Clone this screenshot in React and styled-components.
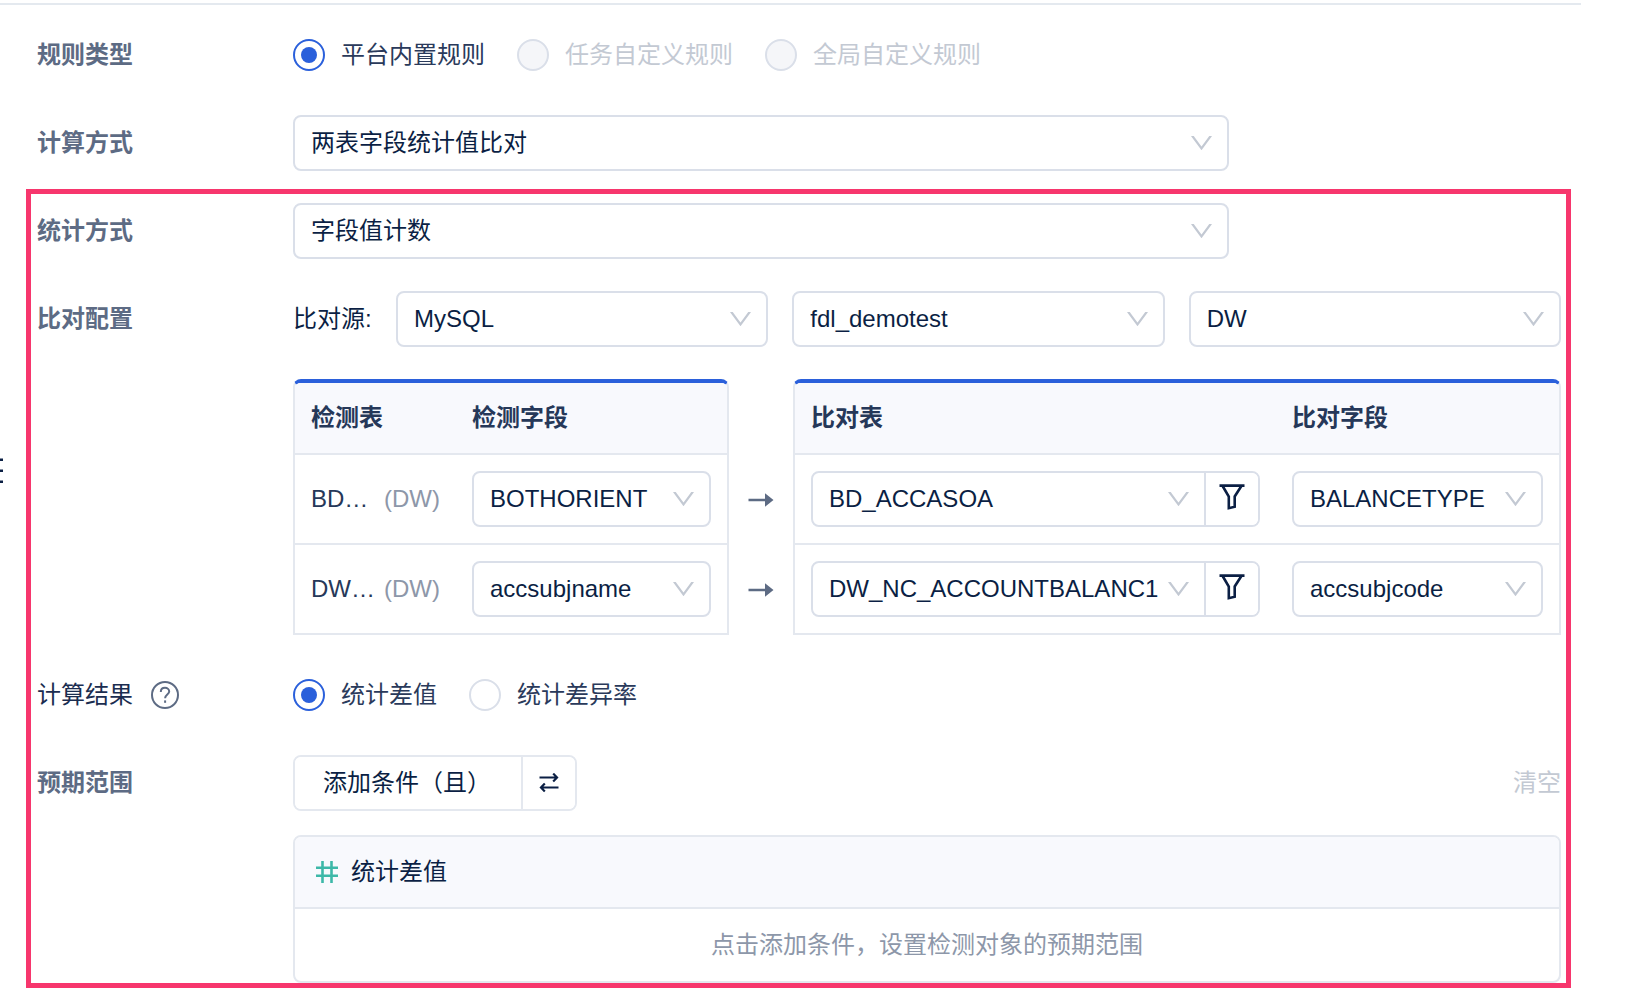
import React from 'react';
import styled, { createGlobalStyle } from 'styled-components';

const GlobalStyle = createGlobalStyle`
  * {
    box-sizing: border-box;
  }

  body {
    margin: 0;
    background: #fff;
    color: #0b1f44;
    font-family: 'Liberation Sans', 'Noto Sans CJK SC', sans-serif;
    font-size: 24px;
    line-height: 32px;
  }

  button,
  input,
  select {
    margin: 0;
    font: inherit;
    color: inherit;
  }
`

const Page = styled.main`
  position: relative;
  padding: 3px 62px 10px 0;
`

const Form = styled.form`
  display: flex;
  flex-direction: column;
  gap: 32px;
  padding: 22px 20px 0 37px;
  border-top: 2px solid #e4e9ef;
`

// handle of the collapsed side panel, it hangs over the left edge
const DragHandle = styled.button`
  position: absolute;
  top: 458px;
  left: 0;
  display: flex;
  padding: 0;
  border: 0;
  background: none;
`

const Highlight = styled.div`
  position: relative;
  display: flex;
  flex-direction: column;
  gap: 32px;

  &::after {
    content: '';
    position: absolute;
    inset: -14px -10px -5px -11px;
    border: 5px solid #f7366d;
    pointer-events: none;
  }
`

const Row = styled.section`
  display: grid;
  grid-template-columns: 256px minmax(0, 1fr);
`

const RowTitle = styled.div`
  display: flex;
  align-items: center;
  gap: 18px;
  height: 56px;
  color: ${props => (props.$plain ? '#1b2d50' : '#5d6b84')};
  font-weight: ${props => (props.$plain ? 400 : 700)};
`

const Stack = styled.div`
  display: flex;
  flex-direction: column;
  gap: ${props => props.$gap}px;
`

const Options = styled.div`
  display: flex;
  align-items: center;
  gap: 32px;
  height: 56px;
`

const Option = styled.label`
  display: flex;
  align-items: center;
  gap: 16px;
  color: ${props => (props.$disabled ? '#c3c9d3' : '#2a3a5b')};
`

const RadioInput = styled.input`
  appearance: none;
  display: grid;
  place-items: center;
  width: 32px;
  height: 32px;
  border: 2px solid #dadfe9;
  border-radius: 50%;
  background: #fff;

  &:checked {
    border-color: #2b60db;
  }

  &:checked::before {
    content: '';
    width: 16px;
    height: 16px;
    border-radius: 50%;
    background: #2b60db;
  }

  &:disabled {
    background: #f5f6f9;
  }
`

const SelectBox = styled.div`
  display: grid;
  align-items: center;
  flex: 1;
  min-width: 0;
  max-width: ${props => (props.$wide ? '936px' : 'none')};

  > * {
    grid-area: 1 / 1;
  }
`

const NativeSelect = styled.select`
  appearance: none;
  width: 100%;
  height: ${props => (props.$bare ? 52 : 56)}px;
  padding: 0 38px 0 16px;
  border: ${props => (props.$bare ? '0' : '2px solid #dadfe9')};
  border-radius: 8px;
  background: #fff;
  text-overflow: ellipsis;
`

const Chevron = styled.svg`
  justify-self: end;
  margin-right: ${props => (props.$bare ? 15 : 17)}px;
  pointer-events: none;
`

const Sources = styled.div`
  display: flex;
  align-items: center;
  gap: 24px;
`

const SourceLabel = styled.span`
  width: 79px;
`

const Mapping = styled.div`
  display: grid;
  grid-template-columns: minmax(0, 436fr) 64px minmax(0, 768fr);
`

const TableCard = styled.div`
  border: 2px solid #e4e8ef;
  border-top: 4px solid #2b60db;
  border-radius: 8px 8px 0 0;
  overflow: hidden;
`

const Table = styled.table`
  width: 100%;
  table-layout: fixed;
  border-collapse: separate;
  border-spacing: 0;
`

const Th = styled.th`
  width: ${props => (props.$width ? `${props.$width}px` : 'auto')};
  height: 72px;
  padding: 0 16px;
  border-bottom: 2px solid #e4e8ef;
  background: #f8f9fd;
  color: #263859;
  text-align: left;
`

const Td = styled.td`
  padding: 16px;
  border-bottom: 2px solid #e4e8ef;

  tr:last-child > & {
    border-bottom: 0;
  }
`

const TableName = styled.div`
  display: flex;
  gap: 8px;
  color: #263859;
  white-space: nowrap;
`

const ShortName = styled.span`
  width: 66px;
`

const Source = styled.span`
  color: #8d97a9;
`

const Arrows = styled.div`
  display: flex;
  flex-direction: column;
  align-items: center;
  gap: 76px;
  padding-top: 114px;
`

const Group = styled.div`
  display: flex;
  width: ${props => (props.$inline ? 'max-content' : 'auto')};
  height: 56px;
  border: 2px solid ${props => (props.$inline ? '#e4e8ef' : '#dadfe9')};
  border-radius: 8px;
  overflow: hidden;
`

const GroupButton = styled.button`
  padding: 0 30px 0 28px;
  border: 0;
  background: #fff;
`

const IconButton = styled.button`
  display: flex;
  flex: none;
  align-items: center;
  justify-content: center;
  width: 54px;
  padding: 0;
  border: 0;
  border-left: 2px solid ${props => (props.$light ? '#e4e8ef' : '#dadfe9')};
  background: #fff;
`

const HelpButton = styled.button`
  display: flex;
  padding: 0;
  border: 0;
  background: none;
`

const Toolbar = styled.div`
  display: flex;
  align-items: center;
  justify-content: space-between;
`

const ClearButton = styled.button`
  padding: 0;
  border: 0;
  background: none;

  &:disabled {
    color: #c3c9d3;
  }
`

const Conditions = styled.div`
  border: 2px solid #e4e8ef;
  border-radius: 8px;
  overflow: hidden;
`

const ConditionsHead = styled.div`
  display: flex;
  align-items: center;
  gap: 12px;
  height: 72px;
  padding: 0 20px;
  border-bottom: 2px solid #e4e8ef;
  background: #f8f9fd;
`

const ConditionsEmpty = styled.div`
  display: flex;
  align-items: center;
  justify-content: center;
  height: 72px;
  color: #8d97a9;
`

const mappings = [
  { table: 'BD…', source: 'DW', field: 'BOTHORIENT', target: 'BD_ACCASOA', targetField: 'BALANCETYPE' },
  { table: 'DW…', source: 'DW', field: 'accsubjname', target: 'DW_NC_ACCOUNTBALANC1', targetField: 'accsubjcode' },
];

const FilterIcon = () => (
  <svg width="26" height="30" viewBox="0 0 26 30" fill="none" stroke="#0b1f44" strokeWidth="2.6">
    <path d="M0.5 1.6H25.5" />
    <path d="M3.6 2L9.8 12.5V24.2L15.7 22.8V12.5L22.4 2" />
  </svg>
);

const ArrowIcon = () => (
  <svg width="26" height="14" viewBox="0 0 26 14">
    <path d="M0.5 5.7H17V0.2L25.5 7L17 13.8V8.3H0.5Z" fill="#5d6b84" />
  </svg>
);

const SwapIcon = () => (
  <svg width="20" height="20" viewBox="0 0 20 20" fill="none" stroke="#0b1f44" strokeWidth="2.2">
    <path d="M0.5 4.5H18M14.2 0.6L18 4.5L14.2 8.4" />
    <path d="M19.5 14.5H2M5.8 10.6L2 14.5L5.8 18.4" />
  </svg>
);

const HashIcon = () => (
  <svg width="24" height="24" viewBox="0 0 24 24" stroke="#3db8a8" strokeWidth="2.6">
    <path d="M7.5 1V23M16.5 1V23M1 7.8H23M1 15.8H23" />
  </svg>
);

const HelpIcon = () => (
  <svg width="28" height="28" viewBox="0 0 28 28" fill="none" stroke="#5d6b84" strokeWidth="2">
    <circle cx="14" cy="14" r="13" />
    <path d="M9.8 11C9.8 8.4 11.6 6.8 14 6.8S18.2 8.4 18.2 10.6C18.2 13.4 14.1 13.8 14.1 17.2" />
    <path d="M14.1 19.4V21.8" />
  </svg>
);

const Select = ({ label, value, wide, bare }) => (
  <SelectBox $wide={wide}>
    <NativeSelect aria-label={label} defaultValue={value} $bare={bare}>
      <option value={value}>{value}</option>
    </NativeSelect>
    <Chevron $bare={bare} width="21" height="14" viewBox="0 0 21 14" fill="none" stroke="#c3c9d3" strokeWidth="2.2">
      <path d="M1 -0.5L10.5 12.4L20 -0.5" />
    </Chevron>
  </SelectBox>
);

const Radio = ({ name, label, checked, disabled }) => (
  <Option $disabled={disabled}>
    <RadioInput type="radio" name={name} defaultChecked={checked} disabled={disabled} />
    {label}
  </Option>
);

const App = () => (
  <>
    <GlobalStyle />
    <Page>
      <DragHandle type="button" aria-label="展开">
        <svg width="3" height="26" viewBox="0 0 3 26" fill="#0b1f44">
          <path d="M0 0.5H3V3H0ZM0 11.5H3V14H0ZM0 22.5H3V25H0Z" />
        </svg>
      </DragHandle>
      <Form>
        <Row>
          <RowTitle>规则类型</RowTitle>
          <Options>
            <Radio name="ruleType" label="平台内置规则" checked />
            <Radio name="ruleType" label="任务自定义规则" disabled />
            <Radio name="ruleType" label="全局自定义规则" disabled />
          </Options>
        </Row>
        <Row>
          <RowTitle>计算方式</RowTitle>
          <Select label="计算方式" value="两表字段统计值比对" wide />
        </Row>

        <Highlight>
          <Row>
            <RowTitle>统计方式</RowTitle>
            <Select label="统计方式" value="字段值计数" wide />
          </Row>
          <Row>
            <RowTitle>比对配置</RowTitle>
            <Stack $gap={32}>
              <Sources>
                <SourceLabel>比对源:</SourceLabel>
                <Select label="数据源类型" value="MySQL" />
                <Select label="数据连接" value="fdl_demotest" />
                <Select label="数据库" value="DW" />
              </Sources>
              <Mapping>
                <TableCard>
                  <Table>
                    <thead>
                      <tr>
                        <Th $width={161}>检测表</Th>
                        <Th>检测字段</Th>
                      </tr>
                    </thead>
                    <tbody>
                      {mappings.map(item => (
                        <tr key={item.field}>
                          <Td>
                            <TableName>
                              <ShortName>{item.table}</ShortName>
                              <Source>({item.source})</Source>
                            </TableName>
                          </Td>
                          <Td>
                            <Select label="检测字段" value={item.field} />
                          </Td>
                        </tr>
                      ))}
                    </tbody>
                  </Table>
                </TableCard>
                <Arrows>
                  {mappings.map(item => <ArrowIcon key={item.field} />)}
                </Arrows>
                <TableCard>
                  <Table>
                    <thead>
                      <tr>
                        <Th>比对表</Th>
                        <Th $width={283}>比对字段</Th>
                      </tr>
                    </thead>
                    <tbody>
                      {mappings.map(item => (
                        <tr key={item.target}>
                          <Td>
                            <Group>
                              <Select label="比对表" value={item.target} bare />
                              <IconButton type="button" aria-label="过滤">
                                <FilterIcon />
                              </IconButton>
                            </Group>
                          </Td>
                          <Td>
                            <Select label="比对字段" value={item.targetField} />
                          </Td>
                        </tr>
                      ))}
                    </tbody>
                  </Table>
                </TableCard>
              </Mapping>
            </Stack>
          </Row>
          <Row>
            <RowTitle $plain>
              计算结果
              <HelpButton type="button" aria-label="帮助">
                <HelpIcon />
              </HelpButton>
            </RowTitle>
            <Options>
              <Radio name="result" label="统计差值" checked />
              <Radio name="result" label="统计差异率" />
            </Options>
          </Row>
          <Row>
            <RowTitle>预期范围</RowTitle>
            <Stack $gap={24}>
              <Toolbar>
                <Group $inline>
                  <GroupButton type="button">添加条件（且）</GroupButton>
                  <IconButton type="button" aria-label="切换且或" $light>
                    <SwapIcon />
                  </IconButton>
                </Group>
                <ClearButton type="button" disabled>清空</ClearButton>
              </Toolbar>
              <Conditions>
                <ConditionsHead>
                  <HashIcon />
                  统计差值
                </ConditionsHead>
                <ConditionsEmpty>点击添加条件，设置检测对象的预期范围</ConditionsEmpty>
              </Conditions>
            </Stack>
          </Row>
        </Highlight>
      </Form>
    </Page>
  </>
);

export default App;
